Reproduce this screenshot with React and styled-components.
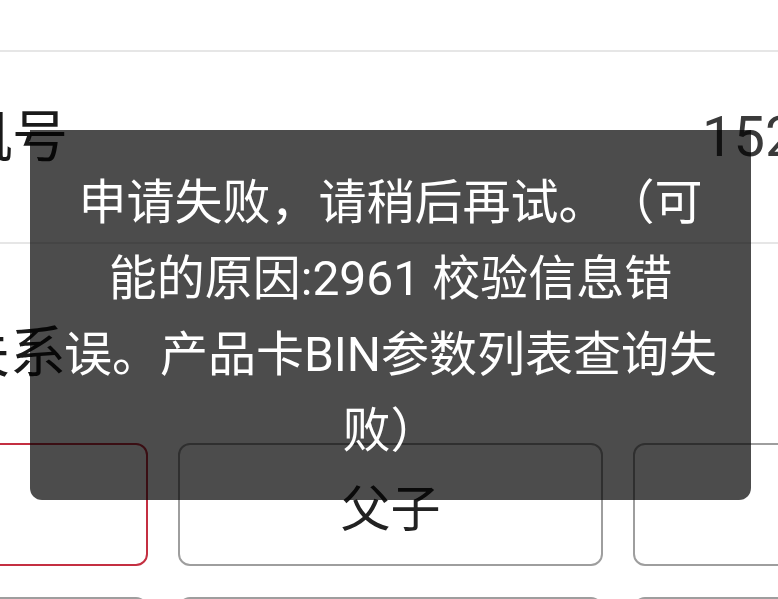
import React from "react";
import styled, { createGlobalStyle } from "styled-components";

const GlobalStyle = createGlobalStyle`
  html, body {
    margin: 0;
    padding: 0;
    background: #ffffff;
    overflow: hidden;
  }
  body {
    font-family: Roboto, "Noto Sans CJK SC", sans-serif;
    text-spacing-trim: space-all;
  }
`;

const Page = styled.div`
  width: 1335px;
  margin-left: -277px;
  display: flex;
  flex-direction: column;
`;

const TopGap = styled.div`
  height: 50px;
  border-bottom: 2px solid #e6e6e6;
`;

const InfoRow = styled.div`
  box-sizing: border-box;
  height: 192px;
  display: flex;
  align-items: flex-start;
  padding: 57px 0 0 65px;
  border-bottom: 2px solid #e6e6e6;
`;

const Label = styled.div`
  width: 914px;
  flex: none;
  font-size: 56px;
  line-height: 56px;
  color: #1a1a1a;
  white-space: nowrap;
`;

const Value = styled.div`
  font-size: 56px;
  line-height: 56px;
  color: #3a3a3a;
  white-space: nowrap;
`;

const Section = styled.div`
  display: flex;
  flex-direction: column;
  padding-top: 81px;
`;

const SectionLabel = styled.div`
  padding-left: 63px;
  font-size: 56px;
  line-height: 56px;
  color: #1a1a1a;
  white-space: nowrap;
`;

const OptionGrid = styled.div`
  display: grid;
  grid-template-columns: repeat(3, 425px);
  column-gap: 30px;
  row-gap: 31px;
  margin-top: 62px;
`;

const OptionButton = styled.div`
  box-sizing: border-box;
  height: 123px;
  border: 2px solid ${(p) => (p.$selected ? "#c42f41" : "#9e9e9e")};
  border-radius: 12px;
  background: #ffffff;
  display: flex;
  align-items: center;
  justify-content: center;
  font-size: 50px;
  color: #222222;
`;

const Toast = styled.div`
  position: fixed;
  left: 30px;
  top: 130px;
  width: 721px;
  box-sizing: border-box;
  padding: 35px 10px 31px;
  background: rgba(0, 0, 0, 0.7);
  border-radius: 0 0 12px 12px;
  color: #ffffff;
  font-size: 48px;
  line-height: 76px;
  text-align: center;
  white-space: nowrap;
  text-spacing-trim: space-all;
`;

const ToastLine = styled.div``;

const options = [
  { label: "本人", selected: true },
  { label: "父子" },
  { label: "父女" },
  { label: "母子" },
  { label: "母女" },
  { label: "夫妻" },
];

const toastLines = [
  "申请失败，请稍后再试。（可",
  "能的原因:2961 校验信息错",
  "误。产品卡BIN参数列表查询失",
  "败）",
];

export default function App() {
  return (
    <>
      <GlobalStyle />
      <Page>
        <TopGap />
        <InfoRow>
          <Label>预留手机号</Label>
          <Value>152****6688</Value>
        </InfoRow>
        <Section>
          <SectionLabel>与本人关系</SectionLabel>
          <OptionGrid>
            {options.map((o) => (
              <OptionButton key={o.label} $selected={o.selected}>
                {o.label}
              </OptionButton>
            ))}
          </OptionGrid>
        </Section>
      </Page>
      <Toast>
        {toastLines.map((l) => (
          <ToastLine key={l}>{l}</ToastLine>
        ))}
      </Toast>
    </>
  );
}
